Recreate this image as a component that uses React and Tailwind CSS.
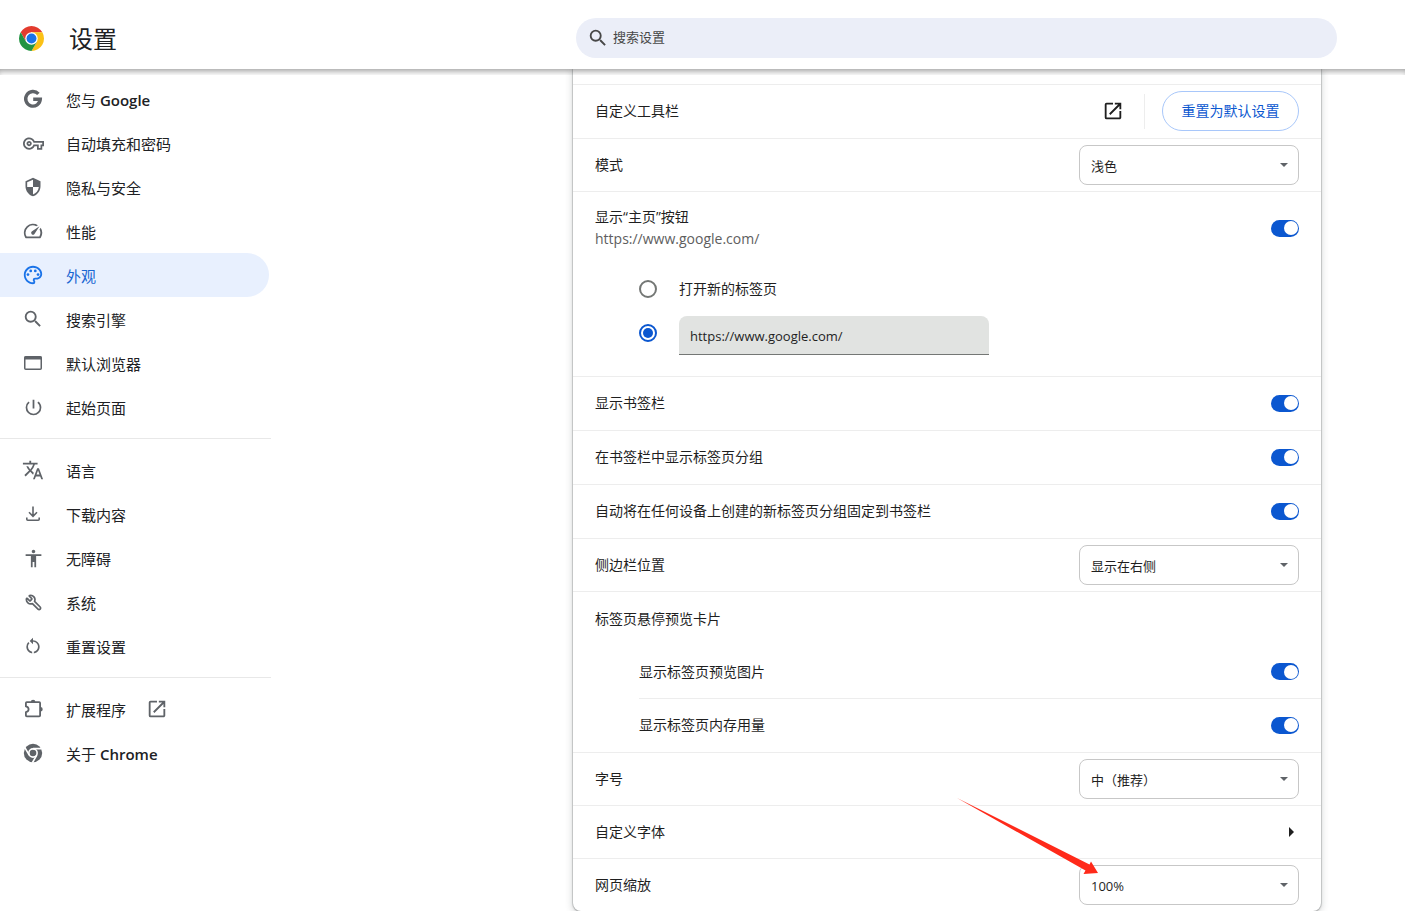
import { Wrench } from "lucide-react";
import {
  MdOutlineVpnKey, MdSecurity, MdOutlineSpeed, MdOutlinePalette, MdSearch,
  MdPowerSettingsNew, MdTranslate, MdAccessibility, MdRestartAlt, MdOpenInNew,
} from "react-icons/md";

function ChromeLogo() {
  return (
    <svg viewBox="0 0 48 48" className="size-[25px] shrink-0" aria-hidden="true">
      <path fill="#e33b2e" d="M24 12h20.78A24 24 0 0 0 3.22 12l10.39 18z" />
      <path fill="#fbc116" d="M34.39 30L24 48a24 24 0 0 0 20.78-36H24z" />
      <path fill="#229342" d="M13.61 30L3.22 12A24 24 0 0 0 24 48l10.39-18z" />
      <circle cx="24" cy="24" r="12" fill="#fff" />
      <circle cx="24" cy="24" r="9.5" fill="#1a73e8" />
    </svg>
  );
}

function GoogleMark({ className }) {
  return (
    <svg viewBox="0 0 22 22" className={className} fill="none" stroke="currentColor" strokeWidth="3.4" aria-hidden="true">
      <path d="M16.400 5.900A7.300 7.300 0 1 0 18.300 11.200H11.200" />
    </svg>
  );
}

function BrowserWindow({ className }) {
  return (
    <svg viewBox="0 0 22 22" className={className} fill="none" stroke="currentColor" aria-hidden="true">
      <rect x="2.75" y="4.75" width="16.500" height="12.500" rx="1" strokeWidth="1.500" />
      <path d="M2.500 6h17" strokeWidth="3" />
    </svg>
  );
}

function Download({ className }) {
  return (
    <svg viewBox="0 0 22 22" className={className} fill="none" stroke="currentColor" strokeWidth="1.600" aria-hidden="true">
      <path d="M11 3.500v9.500M7 9.300l4 4 4-4M4.800 14.500v1.700q0 1 1 1h10.400q1 0 1-1v-1.700" />
    </svg>
  );
}

function MirroredWrench({ className }) {
  return <Wrench strokeWidth={2.4} className={className + " -scale-x-100"} />;
}

function ChromeMono({ className }) {
  return (
    <svg viewBox="0 0 48 48" className={className} aria-hidden="true">
      <circle cx="24" cy="24" r="20" fill="currentColor" />
      <circle cx="24" cy="24" r="9" fill="none" stroke="#fff" strokeWidth="3.5" />
      <path d="M24 14.500h19M15.800 28.800L6.300 12.300M32.200 28.800L22.700 45.300" stroke="#fff" strokeWidth="3.5" />
    </svg>
  );
}

function Puzzle({ className }) {
  return (
    <svg viewBox="0 0 22 22" className={className} aria-hidden="true">
      <path
        fill="none"
        stroke="currentColor"
        strokeWidth="1.800"
        strokeLinejoin="round"
        d="M4.800 4.200h12.400q.9 0 .9.900v12.300q0 .9-.9.900H4.800q-.9 0-.9-.9v-3.200q2.700-.6 2.700-2.900T3.900 8.400V5.100q0-.9.900-.9z"
      />
      <path fill="currentColor" d="M8.800 4a2.300 2.300 0 0 1 4.600 0zM18.400 9a2.300 2.300 0 0 1 0 4.600z" />
    </svg>
  );
}

const groups = [
  [
    [GoogleMark, "您与", "Google"],
    [MdOutlineVpnKey, "自动填充和密码", "", "size-[21px]"],
    [MdSecurity, "隐私与安全", "", "size-[20px]"],
    [MdOutlineSpeed, "性能"],
    [MdOutlinePalette, "外观"],
    [MdSearch, "搜索引擎"],
    [BrowserWindow, "默认浏览器"],
    [MdPowerSettingsNew, "起始页面", "", "size-[21px]"],
  ],
  [
    [MdTranslate, "语言"],
    [Download, "下载内容"],
    [MdAccessibility, "无障碍", "", "size-[21px]"],
    [MirroredWrench, "系统", "", "size-[17px]"],
    [MdRestartAlt, "重置设置", "", "size-[20px]"],
  ],
  [
    [Puzzle, "扩展程序"],
    [ChromeMono, "关于", "Chrome"],
  ],
];

function NavItem({ item }) {
  const [Icon, label, latin, size = "size-[22px]"] = item;
  const active = label === "外观";
  return (
    <a
      href="#"
      aria-current={active ? "page" : undefined}
      className={
        "mr-[2px] flex h-11 items-center gap-[22px] rounded-r-full pl-[22px] text-[15px] " +
        (active ? "bg-[#e8f0fe] text-[#1967d2]" : "text-[#202124]")
      }
    >
      <span className={"flex size-[22px] items-center justify-center " + (active ? "text-[#1a73e8]" : "text-[#5f6368]")}>
        <Icon className={size} />
      </span>
      <span className="pt-[2px]">
        {label}
        {latin && <span className="font-semibold"> {latin}</span>}
      </span>
      {label === "扩展程序" && <MdOpenInNew className="-ml-[2px] size-[22px] text-[#5f6368]" />}
    </a>
  );
}

function Toggle({ id }) {
  return (
    <input
      id={id}
      type="checkbox"
      role="switch"
      defaultChecked
      className="flex h-[17px] w-7 shrink-0 appearance-none items-center justify-end rounded-full bg-[#0b57d0] pr-px before:size-[14px] before:rounded-full before:bg-white"
    />
  );
}

function Select({ id, options }) {
  return (
    <div className="relative w-[220px] shrink-0">
      <select id={id} className="h-10 w-full appearance-none rounded-lg border border-[#c7c7c7] bg-white pt-[2px] pr-8 pl-[11px] text-[13px] text-[#1f1f1f]">
        {options.map((o) => <option key={o}>{o}</option>)}
      </select>
      <svg viewBox="0 0 8 4" className="pointer-events-none absolute top-[18px] right-[11px] h-1 w-2" aria-hidden="true">
        <path fill="#5f6368" d="M0 0h8L4 4z" />
      </svg>
    </div>
  );
}

function ToggleRow({ id, label }) {
  return (
    <div className="flex h-[54px] items-center justify-between border-t border-[#ededed] px-[22px] pb-px">
      <label htmlFor={id}>{label}</label>
      <Toggle id={id} />
    </div>
  );
}

function SelectRow({ id, label, options }) {
  return (
    <div className="flex h-[53px] items-center justify-between border-t border-[#ededed] px-[22px]">
      <label htmlFor={id}>{label}</label>
      <Select id={id} options={options} />
    </div>
  );
}

const radioClass =
  "flex size-[18px] shrink-0 appearance-none items-center justify-center rounded-full border-2 border-[#747775] checked:border-[#0b57d0] checked:before:size-[10px] checked:before:rounded-full checked:before:bg-[#0b57d0]";

export default function App() {
  return (
    <div className="flex h-screen flex-col overflow-hidden bg-white font-['Open_Sans','Noto_Sans_CJK_SC',sans-serif] text-[#1f1f1f]">
      <header className="relative z-10 flex h-[69px] shrink-0 items-center bg-white pr-[68px] pb-[4px] pl-[19px] pt-[11px]">
        <ChromeLogo />
        <h1 className="ml-[25px] shrink-0 pt-[2px] text-2xl leading-8 text-[#202124]">设置</h1>
        <label className="ml-auto flex h-10 w-[761px] items-center gap-1 rounded-full bg-[#ebeef8] pl-[11px]">
          <MdSearch className="size-[22px] text-[#474747]" />
          <input
            type="search"
            aria-label="搜索设置"
            placeholder="搜索设置"
            className="min-w-0 flex-1 bg-transparent text-[13px] outline-none placeholder:text-[#474747]"
          />
        </label>
        <div className="pointer-events-none absolute inset-x-0 top-full h-[6px] shadow-[inset_0_5px_6px_-3px_rgba(0,0,0,0.4)]" />
      </header>

      <div className="flex min-h-0 flex-1">
        <nav className="w-[271px] shrink-0 pt-2">
          {groups.map((items, i) => (
            <div key={i} className={i > 0 ? "mt-[9px] border-t border-[#e8e8e8] pt-[9px]" : ""}>
              {items.map((item) => <NavItem key={item[1]} item={item} />)}
            </div>
          ))}
        </nav>

        <main className="min-w-0 flex-1 pr-[84px] pl-4 text-sm">
          <section className="relative ml-auto max-w-[748px] rounded-b-lg bg-white pt-[15px] shadow-[0_1px_2px_0_rgba(60,64,67,0.3),0_2px_6px_2px_rgba(60,64,67,0.15),0_0_0_1px_rgba(60,64,67,0.15)]">
            <div className="flex h-[54px] items-center border-t border-[#ededed] px-[22px] pb-px">
              <span className="mr-auto">自定义工具栏</span>
              <a href="#" aria-label="自定义工具栏"><MdOpenInNew className="size-[22px]" /></a>
              <div className="mr-[17px] ml-5 h-[35px] w-px bg-[#ededed]" />
              <button className="h-10 min-w-[137px] rounded-full border border-[#a8c7fa] px-4 text-[#0b57d0]">重置为默认设置</button>
            </div>
            <SelectRow id="mode" label="模式" options={["浅色", "深色"]} />

            <div className="border-t border-[#ededed] px-[22px] pb-[21px]">
              <div className="flex h-[72px] items-center justify-between">
                <label htmlFor="home" className="leading-[22px]">
                  显示“主页”按钮
                  <span className="block text-[#5e5e5e]">https://www.google.com/</span>
                </label>
                <Toggle id="home" />
              </div>
              <div className="pt-[3px] pl-11">
                <label className="flex h-11 items-center gap-[22px]">
                  <input type="radio" name="homepage" className={radioClass} />
                  打开新的标签页
                </label>
                <div className="flex h-11 items-center gap-[22px]">
                  <input type="radio" name="homepage" aria-label="https://www.google.com/" defaultChecked className={radioClass} />
                  <input
                    type="text"
                    aria-label="主页网址"
                    defaultValue="https://www.google.com/"
                    className="h-[39px] w-[310px] self-end rounded-t-lg border-b border-[#747775] bg-[#e1e3e1] px-[11px] pt-[2px] text-[13px]"
                  />
                </div>
              </div>
            </div>

            <ToggleRow id="bookmarks" label="显示书签栏" />
            <ToggleRow id="groups" label="在书签栏中显示标签页分组" />
            <ToggleRow id="pin" label="自动将在任何设备上创建的新标签页分组固定到书签栏" />
            <SelectRow id="side" label="侧边栏位置" options={["显示在右侧", "显示在左侧"]} />

            <div className="border-t border-[#ededed] px-[22px]">
              <h2 className="flex h-[53px] items-center">标签页悬停预览卡片</h2>
              <div className="ml-11 flex h-[53px] items-center justify-between">
                <label htmlFor="preview">显示标签页预览图片</label>
                <Toggle id="preview" />
              </div>
            </div>
            <div className="ml-[66px] flex h-[54px] items-center justify-between border-t border-[#ededed] pr-[22px] pb-px">
              <label htmlFor="memory">显示标签页内存用量</label>
              <Toggle id="memory" />
            </div>

            <SelectRow id="size" label="字号" options={["中（推荐）", "大"]} />
            <button className="flex h-[53px] w-full items-center justify-between border-t border-[#ededed] px-[22px]">
              自定义字体
              <svg viewBox="0 0 5 10" className="mr-[5px] h-[10px] w-[5px]" aria-hidden="true">
                <path fill="#1f1f1f" d="M0 0l5 5-5 5z" />
              </svg>
            </button>
            <SelectRow id="zoom" label="网页缩放" options={["100%", "110%"]} />

            <svg viewBox="0 0 142 76" className="pointer-events-none absolute right-[222px] bottom-[37px] h-[76px] w-[142px]" aria-hidden="true">
              <path fill="#ff2a1a" d="M0 0L132.500 66.500 134 63.500 141 75 126.500 76 128.500 72.500z" />
            </svg>
          </section>
        </main>
      </div>
    </div>
  );
}
